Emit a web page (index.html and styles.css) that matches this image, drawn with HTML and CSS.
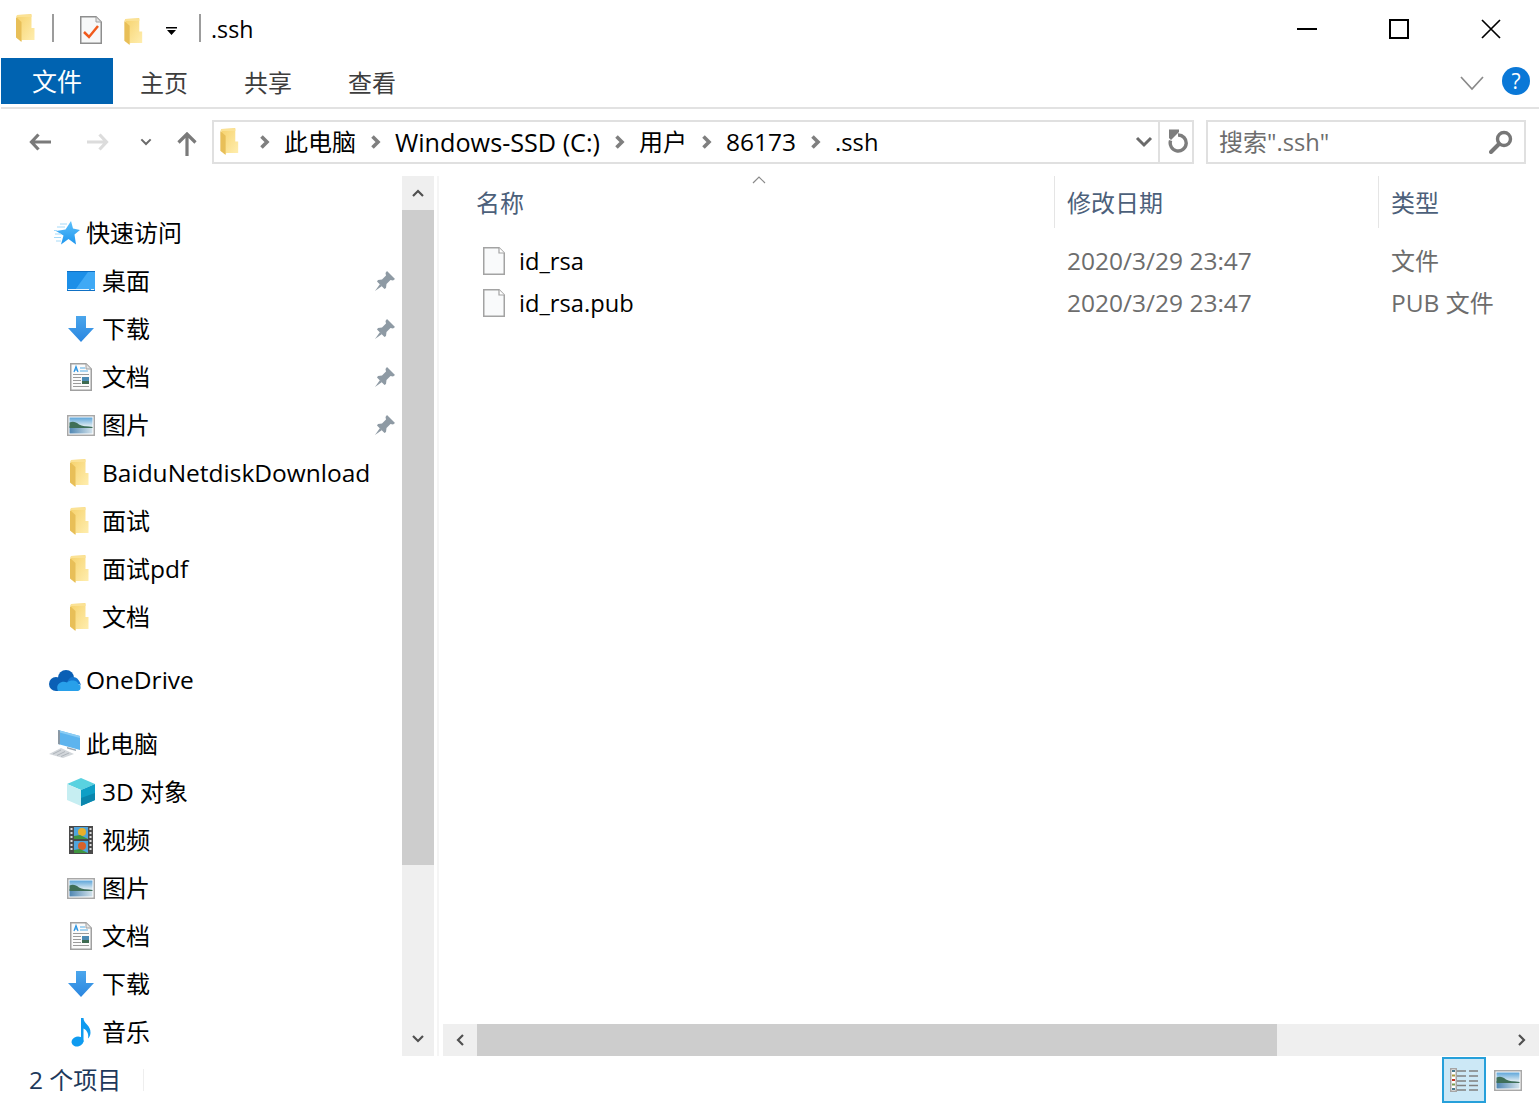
FILE: index.html
```html
<!DOCTYPE html>
<html lang="zh-CN">
<head>
<meta charset="utf-8">
<title>.ssh</title>
<link rel="stylesheet" href="styles.css">
</head>
<body>
<svg class="defs" width="0" height="0" aria-hidden="true">
<defs>
<linearGradient id="gf" x1="0" y1="0" x2="1" y2="1"><stop offset="0" stop-color="#f6d26c"/><stop offset="1" stop-color="#ffeeb0"/></linearGradient>
<linearGradient id="gb" x1="0" y1="0" x2="0" y2="1"><stop offset="0" stop-color="#4ba6ec"/><stop offset="1" stop-color="#2a86e0"/></linearGradient>
<linearGradient id="gs" x1="0" y1="0" x2="0" y2="1"><stop offset="0" stop-color="#5cc0fb"/><stop offset="1" stop-color="#1f96ee"/></linearGradient>
<linearGradient id="gk" x1="0" y1="0" x2="0" y2="1"><stop offset="0" stop-color="#5ea6da"/><stop offset="1" stop-color="#e4eef2"/></linearGradient>
<linearGradient id="gw" x1="0" y1="0" x2="1" y2="0"><stop offset="0" stop-color="#4f86b2"/><stop offset="1" stop-color="#d3e3ec"/></linearGradient>
<symbol id="i-folder" viewBox="0 0 19 28">
<path d="M1 1 L15.500 0 V14 H18.500 V26 H6 V27 L1 24z" fill="url(#gf)"/>
<path d="M0 3 L5.500 8 V28 L0 23.500z" fill="#e8bf58"/>
<path d="M0 3 L1 1 H15.500 V3z" fill="#fbe295"/>
</symbol>
<symbol id="i-file" viewBox="0 0 22 28">
<path d="M.75.75H16L21.250 6V27.250H.75z" fill="#f9fafb" stroke="#a3a3a3" stroke-width="1.500"/>
<path d="M16 .75V6h5.250" fill="#fff" stroke="#a3a3a3" stroke-width="1.200"/>
</symbol>
<symbol id="i-star" viewBox="0 0 26 24">
<path d="M17 0 L19 7.500 L26 9 L20.500 13.500 L22 23.500 L14.500 18 L7 23.500 L9.500 14.500 L2 10 L11.500 8.500z" fill="url(#gs)"/>
<path d="M6 3h7M3 6h8M0 9.500h3M1 13h6M0 16.500h7M2 20h5" stroke="#a5daf9" stroke-width="1" fill="none"/>
</symbol>
<symbol id="i-desk" viewBox="0 0 28 20">
<rect width="28" height="20" fill="#1c8fe8"/>
<path d="M8 19 L21 1 H28 V19z" fill="#3fa9f5"/>
<rect x="0" y="0" width="28" height="1" fill="#0f70c4"/>
<rect x="0" y="19" width="28" height="1" fill="#0f70c4"/>
<path d="M1 18.500H22M24 18.500h3" stroke="#e8f4fd" stroke-width="1"/>
</symbol>
<symbol id="i-down" viewBox="0 0 26 26">
<path d="M8 0H18V12H26L13 26 0 12H8z" fill="url(#gb)"/>
</symbol>
<symbol id="i-doc" viewBox="0 0 22 28">
<path d="M.75.75H16L21.250 6V27.250H.75z" fill="#fbfbfb" stroke="#a0a0a0" stroke-width="1.500"/>
<path d="M16 1v5h5" fill="#e6e6e6" stroke="#a0a0a0"/>
<path d="M4 9 L6 3.500 L8 9M5 7h2" stroke="#2a94e2" stroke-width="1.200" fill="none"/>
<path d="M10 5h5M10 8h8" stroke="#55aee8" stroke-width="1.200"/>
<path d="M3 11.500h16M3 14.500h8M3 17.500h8M3 20.500h8M3 23.500h16" stroke="#9a9a9a" stroke-width="1.100"/>
<rect x="12" y="14" width="7" height="7" fill="#4a8ab4"/>
<rect x="12" y="18" width="7" height="3" fill="#3d6a50"/>
</symbol>
<symbol id="i-pic" viewBox="0 0 28 21">
<rect x=".75" y=".75" width="26.500" height="19.500" fill="#fff" stroke="#a8a8a8" stroke-width="1.500"/>
<rect x="2.500" y="2.500" width="23" height="9" fill="url(#gk)"/>
<rect x="2.500" y="11" width="23" height="7.500" fill="url(#gw)"/>
<path d="M2.500 7.500 C6 6 9 7 12 9.500 C15 11 19 11.500 25.500 12 V13 H2.500z" fill="#3f6f58"/>
</symbol>
<symbol id="i-cloud" viewBox="0 0 32 21">
<circle cx="17" cy="8" r="8" fill="#0a5fb5"/>
<circle cx="7" cy="14" r="7" fill="#0a5fb5"/>
<rect x="7" y="10" width="14" height="11" fill="#0a5fb5"/>
<path d="M24 7 C21 7 19.500 9 18 12.500 L29 14 C31 14 32 15.500 32 17 C32 12 28.500 7 24 7z" fill="#1477d0"/>
<path d="M9 21 C6 15 12 10 18 12.500 C22 9 29 10.500 29 14 C32.500 14.500 32.500 20.500 29 21z" fill="#28a0ea"/>
</symbol>
<symbol id="i-pc" viewBox="0 0 32 28">
<path d="M9 0 L31 6 V20 L9 14z" fill="#5db4ee"/>
<path d="M9 0 L31 6 V8 L9 2z" fill="#8ccdf4"/>
<path d="M9 0 L11 .5 V14.500 L9 14z" fill="#8a98a4"/>
<path d="M18 17 L27 19.500 V21 L18 18.500z" fill="#9aa6b0"/>
<path d="M0 24 L12 18 L25 24 L14 28z" fill="#d2d6da"/>
<path d="M4 24 L12 20M8 25.500 L16 21.500M12 26.500 L20 23" stroke="#aeb4ba" stroke-width="1"/>
</symbol>
<symbol id="i-cube" viewBox="0 0 28 28">
<path d="M14 0 L28 6 L14 12 L0 6z" fill="#59d2e0"/>
<path d="M0 6 L14 12 V28 L0 22z" fill="#c6eef2"/>
<path d="M28 6 L14 12 V28 L28 22z" fill="#0e9fc6"/>
<path d="M14 20 L28 15 V22 L14 28z" fill="#0a86ad"/>
</symbol>
<symbol id="i-film" viewBox="0 0 24 28">
<rect width="24" height="28" fill="#4a4a4a"/>
<rect x="5" y="1" width="14" height="12" fill="#4fa5dc"/>
<rect x="5" y="15" width="14" height="12" fill="#4fa5dc"/>
<circle cx="13" cy="6" r="4" fill="#e8b02a"/>
<circle cx="13" cy="20" r="4" fill="#d8622a"/>
<path d="M5 13 V10 L11 9 L19 13z M5 27 V24 L11 23 L19 27z" fill="#3f9440"/>
<path d="M1.500 3h2M1.500 7h2M1.500 11h2M1.500 15h2M1.500 19h2M1.500 23h2M20.500 3h2M20.500 7h2M20.500 11h2M20.500 15h2M20.500 19h2M20.500 23h2" stroke="#ddd" stroke-width="2"/>
</symbol>
<symbol id="i-note" viewBox="0 0 20 29">
<ellipse cx="6.500" cy="23.500" rx="6" ry="5" fill="#0f9bf0" transform="rotate(-15 6.500 23.500)"/>
<path d="M10 0 H12.500 C12.500 6 20 7 19.500 15 C19.300 18 18 19.500 17 20.500 C18 16 16 12 12.500 10.500 V24 H10z" fill="#0f9bf0"/>
</symbol>
<symbol id="i-pin" viewBox="0 0 20 20">
<path d="M12 0 L20 8 L18 9.500 L15.500 9 L11.500 13 L11 17 L9.500 18 L2 10.500 L3 9 L7 8.500 L11 4.500 L10.500 2z" fill="#8e9aa4"/>
<path d="M5 13 L0 20 L7 15z" fill="#8e9aa4"/>
</symbol>
<symbol id="i-chev" viewBox="0 0 10 14">
<path d="M1.500 1.500 L7 7 L1.500 12.500" fill="none" stroke="#7f7f7f" stroke-width="3.600"/>
</symbol>
<symbol id="i-chevd" viewBox="0 0 18 12">
<path d="M2 2 L9 9 L16 2" fill="none" stroke="#6a6a6a" stroke-width="3"/>
</symbol>
</defs>
</svg>

<div class="window">
  <header class="titlebar">
    <svg class="qa-folder"><use href="#i-folder"/></svg>
    <span class="qa-sep"></span>
    <svg class="qa-doc" viewBox="0 0 22 28">
      <path d="M.75.75H16L21.250 6V27.250H.75z" fill="#f7f8f8" stroke="#8e8e8e" stroke-width="1.500"/>
      <path d="M16 1v5h5" fill="#e4e4e4" stroke="#a0a0a0"/>
      <path d="M4 16 L9 21 L18 10" fill="none" stroke="#f05a1c" stroke-width="2.500"/>
    </svg>
    <svg class="qa-folder2"><use href="#i-folder"/></svg>
    <svg class="qa-drop" viewBox="0 0 11 8">
      <path d="M0 0h11v1.500H0zM1 3h9L5.500 8z" fill="#000"/>
    </svg>
    <span class="qa-sep qa-sep2"></span>
    <span class="title-text">.ssh</span>
    <div class="winctl">
      <svg class="wc" viewBox="0 0 20 20"><path d="M0 10h20" stroke="#000" stroke-width="2"/></svg>
      <svg class="wc" viewBox="0 0 20 20"><rect x="1" y="1" width="18" height="18" fill="none" stroke="#000" stroke-width="2"/></svg>
      <svg class="wc" viewBox="0 0 20 20"><path d="M1 1 L19 19M19 1 L1 19" stroke="#000" stroke-width="1.700"/></svg>
    </div>
  </header>

  <nav class="ribbon">
    <span class="tab-file">文件</span>
    <span class="tab">主页</span>
    <span class="tab">共享</span>
    <span class="tab">查看</span>
    <svg class="rib-exp" viewBox="0 0 24 15"><path d="M1 1 L12 13 L23 1" fill="none" stroke="#8a8a8a" stroke-width="1.700"/></svg>
    <span class="help">?</span>
  </nav>

  <div class="navrow">
    <svg class="nav-ic nav-back" viewBox="0 0 22 18"><path d="M9.500 1.500 L2.500 9 L9.500 16.500M3 9H22" fill="none" stroke="#7a7a7a" stroke-width="3.200"/></svg>
    <svg class="nav-ic nav-fwd" viewBox="0 0 22 18"><path d="M12.500 1.500 L19.500 9 L12.500 16.500M19 9H0" fill="none" stroke="#dcdcdc" stroke-width="3.200"/></svg>
    <svg class="nav-drop"><use href="#i-chevd"/></svg>
    <svg class="nav-ic nav-up" viewBox="0 0 20 24"><path d="M1.500 10.500 L10 2 L18.500 10.500M10 3V24" fill="none" stroke="#7a7a7a" stroke-width="3.200"/></svg>
    <div class="addr">
      <svg class="addr-folder"><use href="#i-folder"/></svg>
      <svg class="crumb-chev"><use href="#i-chev"/></svg>
      <span>此电脑</span>
      <svg class="crumb-chev"><use href="#i-chev"/></svg>
      <span class="lat-lg">Windows-SSD (C:)</span>
      <svg class="crumb-chev"><use href="#i-chev"/></svg>
      <span>用户</span>
      <svg class="crumb-chev"><use href="#i-chev"/></svg>
      <span class="lat">86173</span>
      <svg class="crumb-chev"><use href="#i-chev"/></svg>
      <span class="lat-sm">.ssh</span>
      <svg class="addr-drop"><use href="#i-chevd"/></svg>
      <span class="addr-div"></span>
      <svg class="addr-refresh" viewBox="0 0 20 24"><path d="M10 6 A8 8 0 1 1 2.600 11.500" fill="none" stroke="#7d7d7d" stroke-width="3.400"/><path d="M1 .5 H11 V3 L3 11 L1 9z" fill="#7d7d7d"/></svg>
    </div>
    <div class="search">
      <span class="search-text">搜索<span class="lat-sm">".ssh"</span></span>
      <svg class="search-ic" viewBox="0 0 24 24"><circle cx="15" cy="9" r="6.500" fill="none" stroke="#777" stroke-width="3.400"/><path d="M10 14 L2 22" stroke="#777" stroke-width="4" stroke-linecap="round"/></svg>
    </div>
  </div>

  <main class="main">
    <aside class="side">
      <div class="row lv1"><svg class="ic ic-star"><use href="#i-star"/></svg><span>快速访问</span></div>
      <div class="row lv2"><span class="ib"><svg class="ic-desk"><use href="#i-desk"/></svg></span><span>桌面</span><svg class="pin"><use href="#i-pin"/></svg></div>
      <div class="row lv2"><span class="ib"><svg class="ic-down"><use href="#i-down"/></svg></span><span>下载</span><svg class="pin"><use href="#i-pin"/></svg></div>
      <div class="row lv2"><span class="ib"><svg class="ic-doc"><use href="#i-doc"/></svg></span><span>文档</span><svg class="pin"><use href="#i-pin"/></svg></div>
      <div class="row lv2"><span class="ib"><svg class="ic-pic"><use href="#i-pic"/></svg></span><span>图片</span><svg class="pin"><use href="#i-pin"/></svg></div>
      <div class="row lv2"><span class="ib"><svg class="ic-fold"><use href="#i-folder"/></svg></span><span class="lat">BaiduNetdiskDownload</span></div>
      <div class="row lv2"><span class="ib"><svg class="ic-fold"><use href="#i-folder"/></svg></span><span>面试</span></div>
      <div class="row lv2"><span class="ib"><svg class="ic-fold"><use href="#i-folder"/></svg></span><span>面试<span class="lat">pdf</span></span></div>
      <div class="row lv2"><span class="ib"><svg class="ic-fold"><use href="#i-folder"/></svg></span><span>文档</span></div>
      <div class="row lv1 group"><svg class="ic ic-cloud"><use href="#i-cloud"/></svg><span class="lat">OneDrive</span></div>
      <div class="row lv1 group group2"><svg class="ic ic-pc"><use href="#i-pc"/></svg><span>此电脑</span></div>
      <div class="row lv2"><span class="ib"><svg class="ic-cube"><use href="#i-cube"/></svg></span><span><span class="lat">3D</span> 对象</span></div>
      <div class="row lv2"><span class="ib"><svg class="ic-film"><use href="#i-film"/></svg></span><span>视频</span></div>
      <div class="row lv2"><span class="ib"><svg class="ic-pic"><use href="#i-pic"/></svg></span><span>图片</span></div>
      <div class="row lv2"><span class="ib"><svg class="ic-doc"><use href="#i-doc"/></svg></span><span>文档</span></div>
      <div class="row lv2"><span class="ib"><svg class="ic-down"><use href="#i-down"/></svg></span><span>下载</span></div>
      <div class="row lv2"><span class="ib"><svg class="ic-note"><use href="#i-note"/></svg></span><span>音乐</span></div>
    </aside>
    <div class="vscroll">
      <div class="sb-btn"><svg class="sb-a" viewBox="0 0 12 8"><path d="M1 7 L6 2 L11 7" fill="none" stroke="#505050" stroke-width="2.200"/></svg></div>
      <div class="vthumb"></div>
      <div class="sb-fill"></div>
      <div class="sb-btn"><svg class="sb-a" viewBox="0 0 12 8"><path d="M1 1 L6 6 L11 1" fill="none" stroke="#505050" stroke-width="2.200"/></svg></div>
    </div>
    <div class="pane-sep"></div>
    <section class="content">
      <div class="list">
        <svg class="sort" viewBox="0 0 14 8"><path d="M1 7 L7 1 L13 7" fill="none" stroke="#8a8a8a" stroke-width="1.200"/></svg>
        <div class="cols head">
          <span class="col-name">名称</span>
          <span class="col-date">修改日期</span>
          <span class="col-type">类型</span>
        </div>
        <div class="cols file">
          <span class="col-name"><svg class="file-ic"><use href="#i-file"/></svg><span class="fname lat-sm">id_rsa</span></span>
          <span class="col-date lat">2020/3/29 23:47</span>
          <span class="col-type">文件</span>
        </div>
        <div class="cols file">
          <span class="col-name"><svg class="file-ic"><use href="#i-file"/></svg><span class="fname lat-sm">id_rsa.pub</span></span>
          <span class="col-date lat">2020/3/29 23:47</span>
          <span class="col-type"><span class="lat">PUB</span> 文件</span>
        </div>
      </div>
      <div class="hscroll">
        <div class="hb"><svg class="hb-a" viewBox="0 0 8 12"><path d="M7 1 L2 6 L7 11" fill="none" stroke="#505050" stroke-width="2.200"/></svg></div>
        <div class="hthumb"></div>
        <div class="sb-fill"></div>
        <div class="hb"><svg class="hb-a" viewBox="0 0 8 12"><path d="M1 1 L6 6 L1 11" fill="none" stroke="#505050" stroke-width="2.200"/></svg></div>
      </div>
    </section>
  </main>

  <footer class="status">
    <span class="count"><span class="lat">2</span> 个项目</span>
    <span class="status-sep"></span>
    <span class="view view-on">
      <svg class="view-d" viewBox="0 0 28 24">
        <rect x=".75" y=".75" width="5.500" height="22.500" fill="#fff" stroke="#a5a5a5" stroke-width="1.500"/>
        <path d="M2 2h3v2H2z" fill="#4a7a90"/><path d="M2 6.500h3v2H2z" fill="#a89a40"/><path d="M2 11h3v2H2z" fill="#c03020"/><path d="M2 15.500h3v2H2z" fill="#7a9a50"/><path d="M2 20h3v2H2z" fill="#4a7a90"/>
        <path d="M7 3h9M19 3h9M7 8h9M19 8h9M7 13h9M19 13h9M7 17.500h9M19 17.500h9M7 22h9M19 22h9" stroke="#808080" stroke-width="1.400"/>
      </svg>
    </span>
    <svg class="view-p"><use href="#i-pic"/></svg>
  </footer>
</div>
</body>
</html>
```

FILE: styles.css
```css
* { box-sizing: border-box; }
html, body { margin: 0; padding: 0; background: #fff; }
body {
  width: 1539px;
  height: 1104px;
  overflow: hidden;
  font-family: "Open Sans", "Noto Sans CJK SC", sans-serif;
  font-size: 24px;
  color: #000;
}
.defs { position: absolute; }
svg { display: block; flex: none; }
.lat { font-size: 24.500px; }
.lat-sm { font-size: 23.700px; }
.lat-lg { font-size: 25.200px; }
.window { display: flex; flex-direction: column; height: 1104px; }

.titlebar { display: flex; align-items: center; height: 58px; padding-left: 16px; flex: none; }
.qa-folder { width: 19px; height: 28px; margin-top: -2px; }
.qa-sep { width: 2px; height: 28px; background: #9c9c9c; margin-left: 17px; margin-top: -2px; }
.qa-doc { width: 22px; height: 28px; margin-left: 26px; margin-top: 2px; }
.qa-folder2 { width: 19px; height: 27px; margin-left: 22px; margin-top: 4px; }
.qa-drop { width: 11px; height: 8px; margin-left: 23px; margin-top: 4px; }
.qa-sep2 { margin-left: 22px; }
.title-text { margin-left: 10px; margin-top: -1px; line-height: 32px; font-size: 23.200px; }
.winctl { margin-left: auto; display: flex; gap: 72px; padding-right: 38px; margin-top: -1px; }
.wc { width: 20px; height: 20px; }

.ribbon { display: flex; align-items: center; height: 51px; flex: none; border-bottom: 2px solid #e2e2e2; margin-left: 1px; padding-bottom: 3px; }
.tab-file { width: 112px; height: 46px; background: #0063b1; color: #fff; display: flex; align-items: center; justify-content: center; font-size: 25px; line-height: 1; align-self: flex-start; }
.tab { margin-left: 56px; line-height: 32px; color: #3d3d3d; margin-top: 4px; }
.tab-file + .tab { margin-left: 27px; }
.rib-exp { width: 24px; height: 15px; margin-left: auto; margin-top: 4px; }
.help { width: 28px; height: 28px; border-radius: 50%; background: #0a78d7; color: #fff; font-size: 21px; line-height: 28px; text-align: center; margin: 0 9px 0 18px; }

.navrow { display: flex; align-items: center; height: 44px; margin-top: 11px; padding-left: 29px; flex: none; }
.nav-ic { flex: none; }
.nav-back { width: 22px; height: 18px; }
.nav-fwd { width: 22px; height: 18px; margin-left: 36px; }
.nav-drop { width: 12px; height: 8px; margin-left: 31px; }
.nav-up { width: 20px; height: 24px; margin-left: 25px; margin-top: 4px; }
.addr { display: flex; align-items: center; width: 982px; height: 44px; margin-left: 15px; border: 2px solid #e0e0e0; padding-left: 6px; }
.addr-folder { width: 19px; height: 27px; margin-right: 21px; margin-top: -1px; }
.crumb-chev { width: 10px; height: 14px; margin: 0 14px 0 15px; }
.addr-folder + .crumb-chev { margin-left: 0; }
.addr span { line-height: 32px; }
.addr-drop { width: 18px; height: 12px; margin-left: auto; }
.addr-div { width: 2px; height: 40px; background: #e0e0e0; margin-left: 5px; }
.addr-refresh { width: 20px; height: 24px; margin: -2px 4px 0 8px; }
.search { display: flex; align-items: center; width: 320px; height: 44px; margin-left: 12px; border: 2px solid #e0e0e0; padding: 0 11px; }
.search-text { color: #6d6d6d; line-height: 32px; }
.search-ic { width: 24px; height: 24px; margin-left: auto; }

.main { display: flex; flex: 1; height: 880px; margin-top: 12px; min-height: 0; }
.side { width: 402px; padding-top: 33px; flex: none; overflow: hidden; }
.row { display: flex; align-items: center; height: 48px; white-space: nowrap; line-height: 32px; }
.lv1 { padding-left: 49px; }
.lv2 { padding-left: 66px; padding-right: 7px; }
.group { margin-top: 15px; }
.group2 { margin-top: 16px; }
.ic { width: 32px; height: 28px; margin-right: 5px; }
.ic-star { width: 26px; height: 24px; margin-left: 5px; margin-right: 6px; }
.ic-cloud { height: 21px; }
.ib { width: 30px; margin-right: 6px; display: flex; align-items: center; justify-content: center; flex: none; }
.ic-desk { width: 28px; height: 20px; }
.ic-down { width: 26px; height: 26px; }
.ic-doc { width: 22px; height: 28px; }
.ic-pic { width: 28px; height: 21px; }
.ic-fold { width: 19px; height: 28px; margin-right: 4px; }
.ic-cube { width: 28px; height: 28px; }
.ic-film { width: 24px; height: 28px; }
.ic-note { width: 20px; height: 29px; }
.pin { width: 20px; height: 20px; margin-left: auto; }

.vscroll { display: flex; flex-direction: column; width: 32px; background: #efefef; flex: none; }
.sb-btn { height: 34px; display: flex; align-items: center; justify-content: center; flex: none; }
.sb-a { width: 12px; height: 8px; }
.vthumb { height: 655px; background: #cdcdcd; flex: none; }
.sb-fill { flex: 1; }
.pane-sep { width: 2px; margin-left: 3px; background: #f5f5f5; flex: none; }
.content { flex: 1; margin-left: 4px; display: flex; flex-direction: column; min-width: 0; }
.list { flex: 1; position: relative; min-height: 0; }
.sort { position: absolute; left: 309px; top: 0; width: 14px; height: 8px; }
.cols { display: grid; grid-template-columns: 611px 324px 1fr; }
.head { height: 52px; color: #4c607a; }
.head span { display: flex; align-items: center; padding-top: 2px; line-height: 32px; }
.head .col-name { padding-left: 33px; }
.head .col-date, .head .col-type { padding-left: 12px; border-left: 1px solid #e5e5e5; }
.file { height: 42px; align-items: center; line-height: 32px; color: #6d6d6d; }
.head + .file { margin-top: 12px; }
.file .col-name { display: flex; align-items: center; padding-left: 40px; color: #000; }
.file .col-date, .file .col-type { padding-left: 13px; }
.file-ic { width: 22px; height: 28px; margin-right: 14px; }
.hscroll { display: flex; height: 32px; background: #efefef; flex: none; }
.hb { width: 34px; display: flex; align-items: center; justify-content: center; flex: none; }
.hb-a { width: 8px; height: 12px; }
.hthumb { width: 800px; background: #cdcdcd; flex: none; }

.status { display: flex; align-items: center; height: 48px; padding-left: 29px; flex: none; }
.count { color: #1e395b; line-height: 32px; }
.status-sep { width: 1px; height: 22px; background: #eeeeee; margin-left: 22px; }
.view { display: flex; align-items: center; justify-content: center; width: 44px; height: 46px; margin-left: auto; }
.view-on { background: #cce8f6; border: 2px solid #26a0da; }
.view-d { width: 28px; height: 24px; }
.view-p { width: 28px; height: 21px; margin: 0 17px 0 8px; }
```
